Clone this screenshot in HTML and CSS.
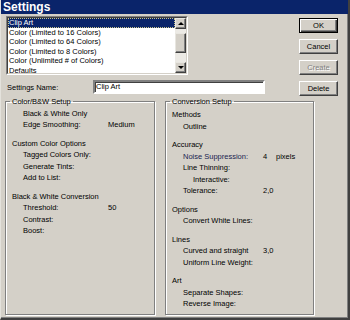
FILE: index.html
```html
<!DOCTYPE html>
<html lang="en">
<head>
  <meta charset="UTF-8">
  <title>Settings</title>
  <link rel="stylesheet" href="styles.css">
</head>
<body>
  <div class="window">
    <div class="titlebar">Settings</div>

    <div class="client">
      <div class="top">
        <div class="top-left">
          <!-- Presets list -->
          <div class="listbox">
            <div class="listbox-inner">
              <ul class="list">
                <li class="selected">Clip Art</li>
                <li>Color (Limited to 16 Colors)</li>
                <li>Color (Limited to 64 Colors)</li>
                <li>Color (Limited to 8 Colors)</li>
                <li>Color (Unlimited # of Colors)</li>
                <li>Defaults</li>
              </ul>
              <div class="scrollbar">
                <div class="sb-btn"><span class="arrow-up"></span></div>
                <div class="sb-track"><div class="sb-thumb"></div></div>
                <div class="sb-btn"><span class="arrow-down"></span></div>
              </div>
            </div>
          </div>

          <div class="name-row">
            <span class="name-label">Settings Name:</span>
            <div class="textbox">Clip Art</div>
          </div>
        </div>

        <div class="buttons">
          <button class="btn btn-default">OK</button>
          <button class="btn">Cancel</button>
          <button class="btn btn-disabled">Create</button>
          <button class="btn">Delete</button>
        </div>
      </div>

      <div class="groups">
        <fieldset class="group">
          <legend>Color/B&amp;W Setup</legend>
          <div class="section">
            <div class="row sub">Black &amp; White Only</div>
            <div class="row sub"><span class="label">Edge Smoothing:</span><span>Medium</span></div>
          </div>
          <div class="section">
            <div class="row">Custom Color Options</div>
            <div class="row sub">Tagged Colors Only:</div>
            <div class="row sub">Generate Tints:</div>
            <div class="row sub">Add to List:</div>
          </div>
          <div class="section">
            <div class="row">Black &amp; White Conversion</div>
            <div class="row sub"><span class="label">Threshold:</span><span>50</span></div>
            <div class="row sub">Contrast:</div>
            <div class="row sub">Boost:</div>
          </div>
        </fieldset>

        <fieldset class="group group-right">
          <legend>Conversion Setup</legend>
          <div class="section">
            <div class="row">Methods</div>
            <div class="row sub">Outline</div>
          </div>
          <div class="section">
            <div class="row">Accuracy</div>
            <div class="row sub"><span class="label active">Noise Suppression:</span><span class="num">4</span><span>pixels</span></div>
            <div class="row sub">Line Thinning:</div>
            <div class="row subsub">Interactive:</div>
            <div class="row sub"><span class="label">Tolerance:</span><span>2,0</span></div>
          </div>
          <div class="section">
            <div class="row">Options</div>
            <div class="row sub">Convert White Lines:</div>
          </div>
          <div class="section section-tight">
            <div class="row">Lines</div>
            <div class="row sub"><span class="label">Curved and straight</span><span>3,0</span></div>
            <div class="row sub">Uniform Line Weight:</div>
          </div>
          <div class="section">
            <div class="row">Art</div>
            <div class="row sub">Separate Shapes:</div>
            <div class="row sub">Reverse Image:</div>
          </div>
        </fieldset>
      </div>
    </div>
  </div>
</body>
</html>
```

FILE: styles.css
```css
* {
  margin: 0;
  padding: 0;
  box-sizing: border-box;
}

body {
  width: 350px;
  height: 320px;
  font-family: 'Liberation Sans', Arial, sans-serif;
  font-size: 7.5px;
  color: #000;
  background: #d4d0c8;
  overflow: hidden;
}

.window {
  width: 350px;
  height: 320px;
  background: #d4d0c8;
  border-left: 1px solid #e4e2dc;
  border-right: 2px solid #404040;
  border-bottom: 2px solid #404040;
  box-shadow: inset -1px -1px #808080;
}

.titlebar {
  height: 14px;
  line-height: 14px;
  padding-left: 2px;
  background: #0a246a;
  color: #fff;
  font-size: 12px;
  font-weight: bold;
}

.client {
  padding: 2px 10px 0 5px;
}

.top {
  display: flex;
  justify-content: space-between;
}

/* List box */
.listbox {
  width: 182px;
  height: 59px;
  border: 1px solid;
  border-color: #808080 #fff #fff #808080;
}

.listbox-inner {
  display: flex;
  height: 100%;
  border: 1px solid;
  border-color: #404040 #d4d0c8 #d4d0c8 #404040;
  background: #fff;
}

.list {
  flex: 1;
  list-style: none;
  overflow: hidden;
}

.list li {
  height: 9.5px;
  line-height: 9.5px;
  padding-left: 1px;
  white-space: nowrap;
}

.list li.selected {
  background: #0a246a;
  color: #fff;
  outline: 1px dotted #c8c38a;
  outline-offset: -1px;
}

.scrollbar {
  width: 11px;
  display: flex;
  flex-direction: column;
}

.sb-btn {
  height: 11px;
  display: flex;
  align-items: center;
  justify-content: center;
  background: #d4d0c8;
  border: 1px solid;
  border-color: #e8e6e0 #404040 #404040 #e8e6e0;
  box-shadow: inset -1px -1px #808080;
}

.arrow-up,
.arrow-down {
  width: 0;
  height: 0;
  border-left: 3px solid transparent;
  border-right: 3px solid transparent;
}

.arrow-up {
  border-bottom: 3px solid #000;
}

.arrow-down {
  border-top: 3px solid #000;
}

.sb-track {
  flex: 1;
  background: #eceae5;
}

.sb-thumb {
  height: 20px;
  margin-top: 4px;
  background: #d4d0c8;
  border: 1px solid;
  border-color: #e8e6e0 #404040 #404040 #e8e6e0;
  box-shadow: inset -1px -1px #808080;
}

/* Name row */
.name-row {
  display: flex;
  align-items: center;
  margin-top: 5px;
}

.name-label {
  width: 87px;
  padding-left: 1px;
}

.textbox {
  width: 172px;
  height: 14px;
  line-height: 10px;
  padding-left: 1px;
  background: #fff;
  border: 2px solid;
  border-color: #808080 #fff #fff #808080;
  box-shadow: inset 1px 1px #404040;
}

/* Buttons */
.buttons {
  display: flex;
  flex-direction: column;
  gap: 6px;
  padding-top: 2px;
}

.btn {
  width: 39px;
  height: 15px;
  font-family: inherit;
  font-size: 7.5px;
  color: #000;
  background: #d4d0c8;
  border: 1px solid;
  border-color: #fff #404040 #404040 #fff;
  box-shadow: inset -1px -1px #808080;
}

.btn-default {
  border-color: #000;
  box-shadow: inset 1px 1px #fff, inset -1px -1px #404040, inset -2px -2px #808080;
}

.btn-disabled {
  color: #808080;
  text-shadow: 1px 1px #fff;
}

/* Group boxes */
.groups {
  display: flex;
  gap: 10px;
  margin-left: -1px;
}

.group {
  width: 150px;
  height: 219px;
  min-width: 0;
  padding: 0 0 0 6px;
  border: 1px solid #808080;
  box-shadow: inset 1px 1px #fff, 1px 1px #fff;
}

.group-right {
  width: 149px;
  padding-top: 1.5px;
}

.group legend {
  margin-left: -2px;
  padding: 0 2px;
  line-height: 11.5px;
}

.section + .section {
  margin-top: 7px;
}

.section-tight {
  margin-top: 6px;
}

.row {
  display: flex;
  height: 11.5px;
  line-height: 11.5px;
  white-space: nowrap;
}

.row.sub {
  padding-left: 11px;
}

.row.subsub {
  padding-left: 21px;
}

.label {
  width: 85px;
}

.group-right .label {
  width: 80px;
}

.num {
  width: 13px;
}

.active {
  color: #1a2450;
}
```
